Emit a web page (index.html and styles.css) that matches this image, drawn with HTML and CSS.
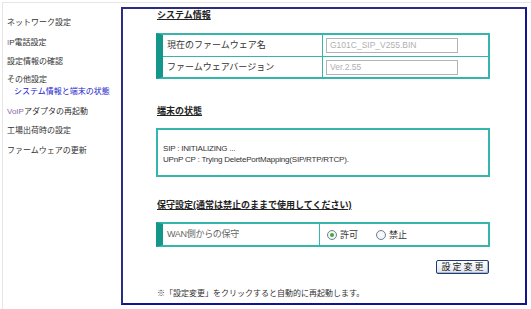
FILE: index.html
```html
<!DOCTYPE html>
<html lang="ja">
<head>
<meta charset="utf-8">
<link rel="stylesheet" href="styles.css">
</head>
<body>
<div class="page">
  <nav class="nav">
    <div class="nav-item">ネットワーク設定</div>
    <div class="nav-item"><span class="visited">I</span>P電話設定</div>
    <div class="nav-item">設定情報の確認</div>
    <div class="nav-item nav-parent">その他設定</div>
    <div class="nav-sub">システム情報と端末の状態</div>
    <div class="nav-item"><span class="visited">VoIP</span>アダプタの再起動</div>
    <div class="nav-item">工場出荷時の設定</div>
    <div class="nav-item">ファームウェアの更新</div>
  </nav>
  <main class="panel">
    <h2 class="heading">システム情報</h2>
    <div class="box table">
      <div class="row">
        <div class="label">現在のファームウェア名</div>
        <div class="value"><span class="field">G101C_SIP_V255.BIN</span></div>
      </div>
      <div class="row">
        <div class="label">ファームウェアバージョン</div>
        <div class="value"><span class="field">Ver.2.55</span></div>
      </div>
    </div>

    <h2 class="heading h-status">端末の状態</h2>
    <div class="status">
      <div>SIP : INITIALIZING ...</div>
      <div>UPnP CP : Trying DeletePortMapping(SIP/RTP/RTCP).</div>
    </div>

    <h2 class="heading h-maint">保守設定(通常は禁止のままで使用してください)</h2>
    <div class="box table maint">
      <div class="row">
        <div class="label">WAN側からの保守</div>
        <div class="value radios">
          <span class="radio-opt"><span class="radio checked"></span>許可</span>
          <span class="radio-opt"><span class="radio"></span>禁止</span>
        </div>
      </div>
    </div>

    <div class="actions"><button class="btn">設定変更</button></div>
    <p class="note">※「設定変更」をクリックすると自動的に再起動します。</p>
  </main>
</div>
</body>
</html>
```

FILE: styles.css
```css
* { box-sizing: border-box; }
html, body { margin: 0; padding: 0; background: #fff; }
body {
  font-family: "Liberation Sans", "Noto Sans CJK JP", sans-serif;
  font-size: 9px;
  color: #333;
  width: 531px;
  height: 309px;
  overflow: hidden;
}
.page {
  display: flex;
  align-items: flex-start;
  height: 309px;
  border-top: 1px solid #e6e6e6;
  border-left: 1px solid #e6e6e6;
  margin: 2px 0 0 2px;
}
.nav {
  width: 118px;
  padding: 10px 0 0 4px;
  flex: none;
  font-size: 8px;
}
.nav-item {
  height: 19.5px;
  line-height: 19.5px;
  color: #333;
  white-space: nowrap;
}
.nav-parent { height: 13px; line-height: 13px; margin-top: 1.5px; }
.nav-sub {
  height: 15.5px;
  line-height: 11px;
  padding-left: 7px;
  color: #2222cc;
  white-space: nowrap;
}
.visited { color: #8a6aa8; }

.panel {
  margin-top: 4px;
  width: 406px;
  height: 298px;
  border: 2px solid #2c2c82;
  border-right-color: #14148e;
  border-bottom-color: #14148e;
  padding: 0 34px 0 33px;
  flex: none;
}
.heading {
  margin: 0;
  font-size: 9px;
  line-height: 12px;
  font-weight: bold;
  text-decoration: underline;
  color: #222;
  padding-left: 1px;
}
.box {
  border: 2px solid #35b5ab;
  border-left: 7px solid #15968b;
}
.table { margin-top: 12px; width: 334px; }
.row {
  display: flex;
  height: 21px;
  align-items: stretch;
}
.row + .row { border-top: 1px solid #35b5ab; }
.label {
  width: 160px;
  padding-left: 4px;
  line-height: 20px;
  color: #333;
  border-right: 1px solid #35b5ab;
}
.value {
  flex: 1;
  display: flex;
  align-items: center;
  padding-left: 3px;
}
.field {
  width: 132px;
  height: 15px;
  border: 1px solid #b4b4b4;
  color: #b0b0b0;
  line-height: 13px;
  padding-left: 3px;
  font-size: 8.5px;
}
.h-status { margin-top: 26px; }
.status {
  margin-top: 11px;
  width: 334px;
  height: 49px;
  border: 2px solid #35b5ab;
  padding: 13px 0 0 5px;
  line-height: 11px;
  color: #333;
  font-size: 8px;
  letter-spacing: -0.2px;
}
.h-maint { margin-top: 22px; }
.maint { margin-top: 11px; }
.maint .row { height: 21px; }
.maint .label { width: 157px; color: #666; letter-spacing: -0.3px; }
.radios { padding-left: 7px; gap: 18px; }
.radio-opt { display: inline-flex; align-items: center; gap: 3px; color: #333; }
.radio {
  width: 10px;
  height: 10px;
  border-radius: 50%;
  border: 1px solid #6d7f9a;
  background: radial-gradient(circle, #fff 0, #eaeaea 100%);
  position: relative;
  display: inline-block;
}
.radio.checked::after {
  content: "";
  position: absolute;
  left: 2px;
  top: 2px;
  width: 4px;
  height: 4px;
  border-radius: 50%;
  background: #3fa83a;
}
.actions {
  display: flex;
  justify-content: flex-end;
  width: 334px;
  margin-top: 13px;
}
.btn {
  font-family: "Liberation Sans", "Noto Sans CJK JP", sans-serif;
  font-size: 9px;
  letter-spacing: 2px;
  height: 14px;
  width: 53px;
  padding: 0 0 0 2px;
  line-height: 12px;
  color: #222;
  border: 1px solid #1d3c78;
  border-radius: 2px;
  background: linear-gradient(#ffffff, #dfe4ef);
  box-shadow: inset -1px -1px 0 #aeb8cc;
  margin-right: 1px;
}
.note {
  margin: 14px 0 0 0;
  line-height: 12px;
  color: #333;
  padding-left: 1px;
  font-size: 8px;
}
```
